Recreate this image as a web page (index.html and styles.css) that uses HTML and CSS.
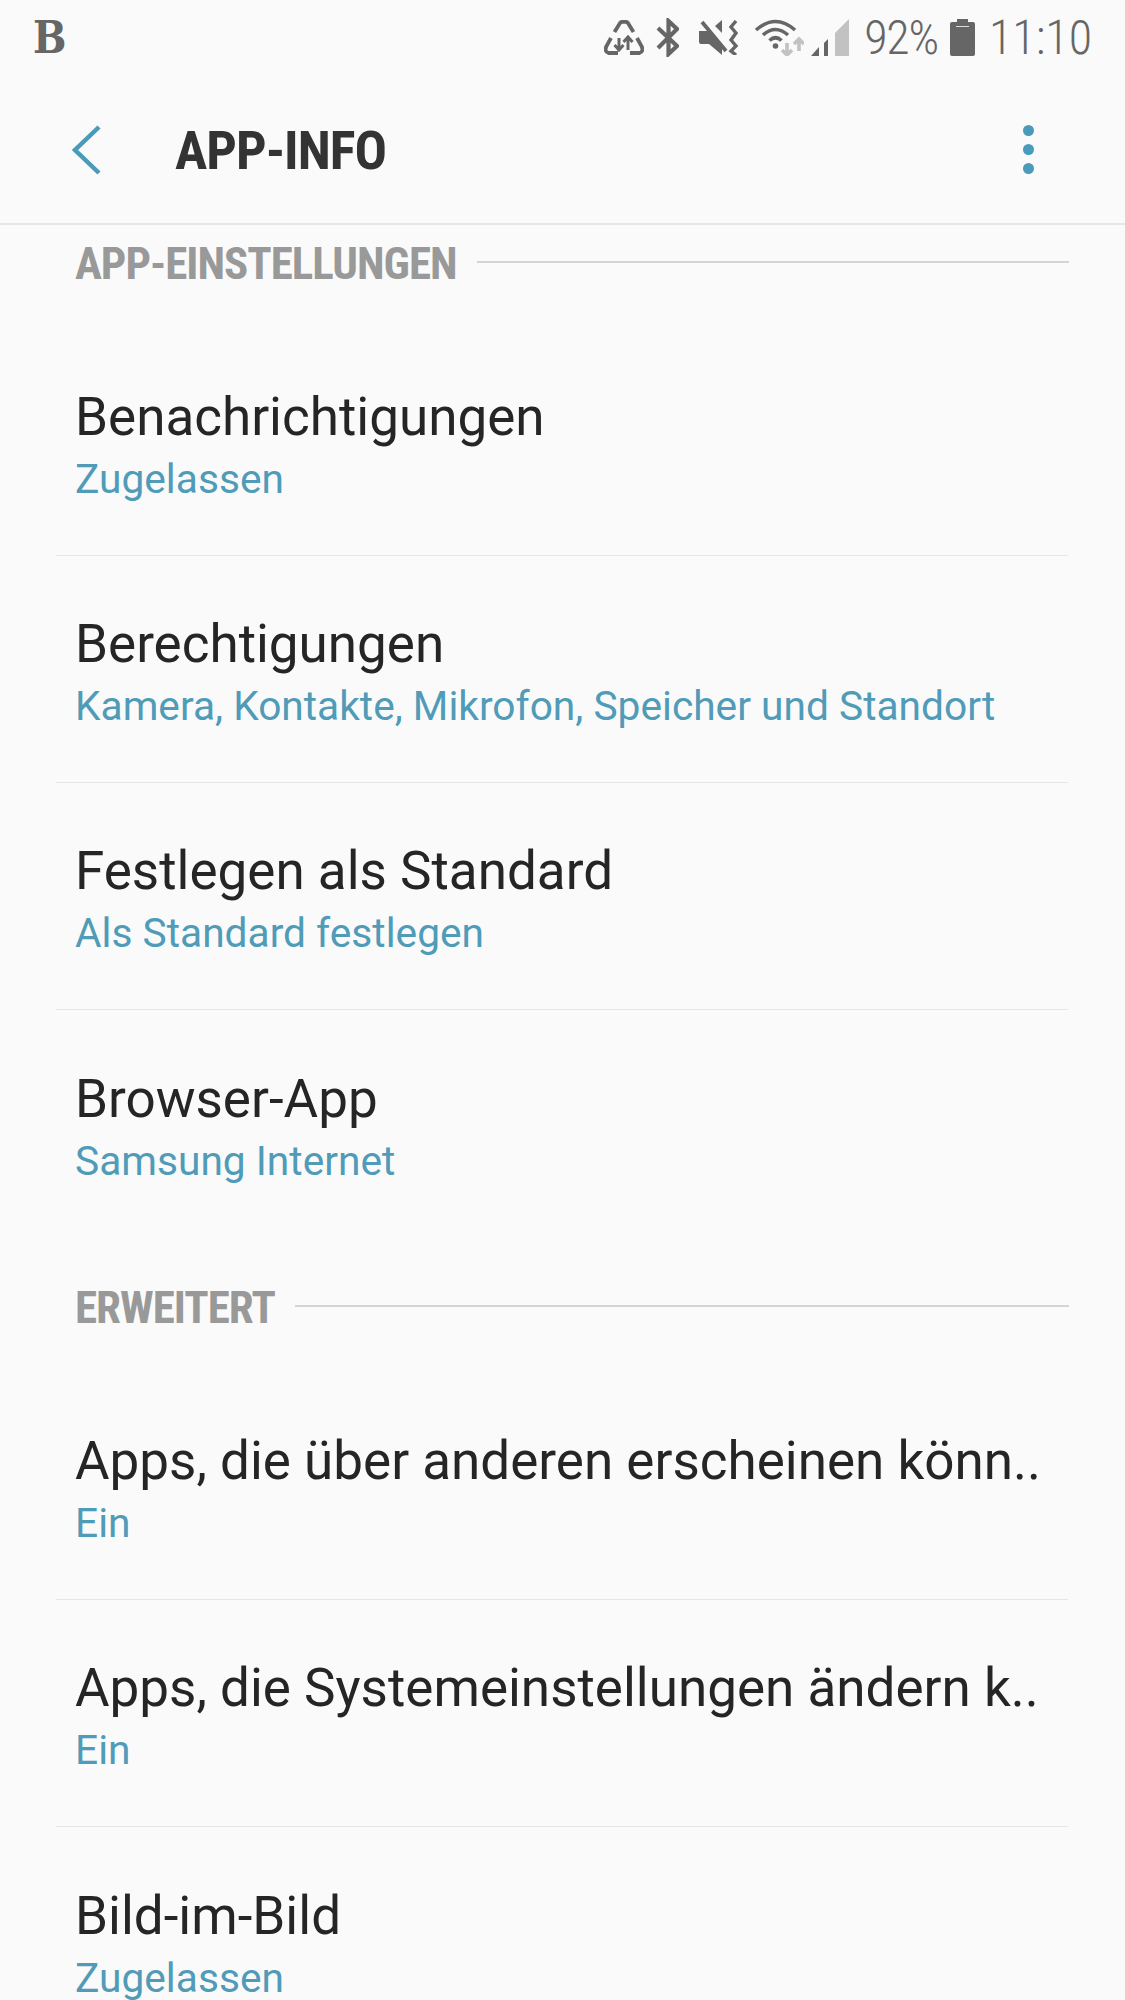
FILE: index.html
```html
<!DOCTYPE html>
<html lang="de">
<head>
    <meta charset="UTF-8">
    <meta name="viewport" content="width=device-width, initial-scale=1.0">
    <title>App-Info</title>
    <link rel="stylesheet" href="styles.css">
</head>
<body>
    <div class="status-bar">
        <span class="status-logo">B</span>
        <div class="status-right">
            <svg class="icon-recycle" width="40" height="35" viewBox="0 0 40 35" fill="none" stroke="#666" stroke-width="3.800">
                <path d="M10.500 12 L16 3 Q17 1.800 18.500 1.800 H21.500 Q23 1.800 24 3 L29.500 12"/>
                <path d="M7 18 L2.500 26 Q0 31.500 4.500 33 H14"/>
                <path d="M33 18 L37.500 26 Q40 31.500 35.500 33 H26"/>
                <path d="M15 18 V30 M10.500 25 L15 30 L19.500 25" stroke-width="3"/>
                <path d="M24 30 V17 M19.500 22 L24 17 L28.500 22" stroke-width="3"/>
            </svg>
            <svg class="icon-bt" width="23" height="39" viewBox="0 0 23 39" fill="none" stroke="#666" stroke-width="4.200">
                <path d="M2 10 L21 28 L12.500 36 V3 L21 11 L2 30"/>
            </svg>
            <svg class="icon-mute" width="40" height="35" viewBox="0 0 40 35" fill="#666">
                <path d="M0 11 H10 L23 26 V35 L10 24 H2 Q0 24 0 22 Z"/>
                <path d="M16 6 L23 0 V13 Z"/>
                <path d="M3 2 L27 31" fill="none" stroke="#666" stroke-width="3.800"/>
                <path d="M37 1 L32 7 L37 13 L32 20 L37 26 L32 31 L37 35" fill="none" stroke="#666" stroke-width="3.400"/>
            </svg>
            <svg class="icon-wifi" width="50" height="37" viewBox="0 0 50 37" fill="none" stroke="#666" stroke-width="3.600">
                <path d="M2 11 Q21.500 -6 41 11"/>
                <path d="M9 16 Q21.500 5 34 16"/>
                <path d="M15.500 21.500 Q21.500 16 27.500 21.500"/>
                <circle cx="21.500" cy="27" r="2.800" fill="#666" stroke="none"/>
                <path d="M33 24 V36 M28 31 L33 36 L38 31" stroke="#c2c2c2"/>
                <path d="M45 32 V20 M40 25 L45 20 L50 25" stroke="#c2c2c2"/>
            </svg>
            <svg class="icon-signal" width="38" height="37" viewBox="0 0 38 37">
                <path d="M0 37 L8 28 V37 Z" fill="#666"/>
                <path d="M13 24 L17 20 V37 H13 Z" fill="#666"/>
                <path d="M24 14 L38 0 V37 H24 Z" fill="#c2c2c2"/>
            </svg>
            <span class="status-text status-battery">92%</span>
            <svg class="icon-battery" width="25" height="37" viewBox="0 0 25 37" fill="#666">
                <path d="M7 0 H18 V3 H23 Q25 3 25 5 V35 Q25 37 23 37 H2 Q0 37 0 35 V5 Q0 3 2 3 H7 Z"/>
                <path d="M6 7 H19 V8 H6 Z" fill="#ddd"/>
            </svg>
            <span class="status-text status-time">11:10</span>
        </div>
    </div>

    <div class="app-bar">
        <svg class="back-icon" width="30" height="50" viewBox="0 0 30 50" fill="none" stroke="#4a9aba" stroke-width="4.500">
            <path d="M28 2 L4 25 L28 48"/>
        </svg>
        <h1 class="app-title">APP-INFO</h1>
        <div class="more-icon">
            <span class="dot"></span>
            <span class="dot"></span>
            <span class="dot"></span>
        </div>
    </div>

    <div class="content">
        <div class="section-head section-first">
            <span class="section-label">APP-EINSTELLUNGEN</span>
            <span class="section-line"></span>
        </div>
        <div class="row">
            <div class="row-title">Benachrichtigungen</div>
            <div class="row-sub">Zugelassen</div>
        </div>
        <div class="row">
            <div class="row-title">Berechtigungen</div>
            <div class="row-sub">Kamera, Kontakte, Mikrofon, Speicher und Standort</div>
        </div>
        <div class="row">
            <div class="row-title">Festlegen als Standard</div>
            <div class="row-sub">Als Standard festlegen</div>
        </div>
        <div class="row row-last">
            <div class="row-title">Browser-App</div>
            <div class="row-sub">Samsung Internet</div>
        </div>

        <div class="section-head">
            <span class="section-label">ERWEITERT</span>
            <span class="section-line"></span>
        </div>
        <div class="row">
            <div class="row-title">Apps, die über anderen erscheinen könn..</div>
            <div class="row-sub">Ein</div>
        </div>
        <div class="row">
            <div class="row-title">Apps, die Systemeinstellungen ändern k..</div>
            <div class="row-sub">Ein</div>
        </div>
        <div class="row row-last">
            <div class="row-title">Bild-im-Bild</div>
            <div class="row-sub">Zugelassen</div>
        </div>
    </div>
</body>
</html>
```

FILE: styles.css
```css
html, body {
    margin: 0;
    padding: 0;
}

body {
    width: 1125px;
    height: 2000px;
    overflow: hidden;
    background-color: #fafafa;
    font-family: Roboto, "Noto Sans", sans-serif;
}

.status-bar {
    height: 75px;
    display: flex;
    justify-content: space-between;
    padding: 0 33px 0 33px;
    color: #666;
}

.status-logo {
    font-family: "DejaVu Serif", serif;
    font-weight: bold;
    font-stretch: condensed;
    font-size: 44px;
    line-height: 75px;
}

.status-right {
    display: flex;
    align-items: center;
}

.status-right svg {
    flex: none;
}

.icon-bt { margin-left: 12px; }
.icon-mute { margin-left: 20px; }
.icon-wifi { margin-left: 15px; }
.icon-signal { margin-left: 7px; }
.icon-battery { margin-left: 12px; }

.status-text {
    font-size: 48px;
    font-weight: 350;
    font-stretch: condensed;
    display: inline-block;
    line-height: 75px;
    white-space: nowrap;
}

.status-battery {
    margin-left: 15px;
    letter-spacing: -1.2px;
}

.status-time {
    margin-left: 14px;
}

.app-bar {
    height: 146px;
    display: flex;
    align-items: center;
    border-bottom: 2px solid #e6e6e6;
    padding: 2px 0 0 71px;
    position: relative;
}

.back-icon {
    margin-right: 74px;
}

.app-title {
    margin: 0;
    font-size: 54px;
    font-weight: bold;
    font-stretch: condensed;
    color: #333;
    letter-spacing: -1px;
}

.more-icon {
    position: absolute;
    right: 91px;
    top: 50px;
    display: flex;
    flex-direction: column;
    gap: 8px;
}

.dot {
    width: 11px;
    height: 11px;
    border-radius: 50%;
    background-color: #4a9aba;
}

.section-head {
    display: flex;
    align-items: center;
    height: 60px;
    margin: 39px 56px 37px 75px;
}

.section-first {
    margin-top: 7px;
}

.section-label {
    padding-top: 2px;
    font-size: 45px;
    font-weight: bold;
    font-stretch: condensed;
    color: #999;
    letter-spacing: -1px;
    white-space: nowrap;
}

.section-line {
    flex: 1;
    height: 2px;
    margin-left: 20px;
    background-color: #d4d4d4;
}

.row {
    height: 227px;
    margin: 0 57px 0 56px;
    padding: 6px 0 0 19px;
    border-bottom: 1px solid #e6e6e6;
    box-sizing: border-box;
    display: flex;
    flex-direction: column;
    justify-content: center;
}

.row-last {
    border-bottom: none;
}

.row-title {
    font-size: 53px;
    line-height: 68px;
    color: #252525;
    white-space: nowrap;
}

.row-sub {
    font-size: 40.7px;
    line-height: 56px;
    color: #4f9bb8;
    white-space: nowrap;
}
```
